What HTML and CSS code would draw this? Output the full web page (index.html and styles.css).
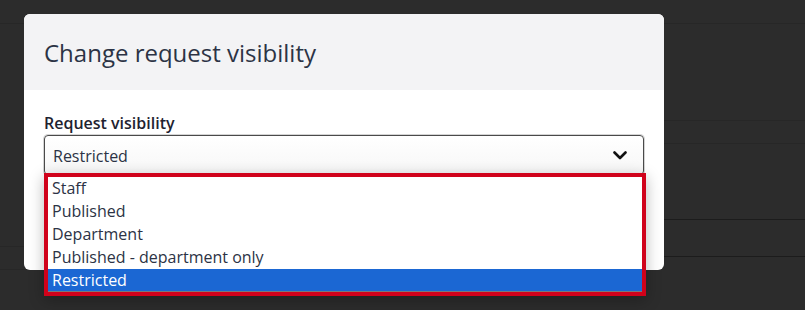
FILE: index.html
```html
<!DOCTYPE html>
<html lang="en">
<head>
<meta charset="utf-8">
<title>Change request visibility</title>
<link rel="stylesheet" href="styles.css">
</head>
<body>
<div class="backdrop">
  <div class="bg-side">
    <div class="bg-row side-top"></div>
    <div class="bg-row side-mid"></div>
    <div class="bg-row side-low"></div>
    <div class="bg-row side-rest"></div>
  </div>
  <div class="bg-main">
    <div class="bg-row main-top"></div>
    <div class="bg-row main-a"></div>
    <div class="bg-row main-b"></div>
    <div class="bg-row main-c dark"></div>
    <div class="bg-row main-d dark"></div>
    <div class="bg-row main-rest"></div>
  </div>
</div>

<div class="modal" role="dialog" aria-labelledby="modal-title">
  <div class="modal-header">
    <h2 class="modal-title" id="modal-title">Change request visibility</h2>
  </div>
  <div class="modal-body">
    <label class="field-label">Request visibility</label>
    <div class="select-wrap">
      <div class="select">
        <span class="select-value">Restricted</span>
        <svg class="chevron" width="14" height="9" viewBox="0 0 14 9" aria-hidden="true">
          <path d="M1.5 1.5 L7 7 L12.5 1.5" fill="none" stroke="#111" stroke-width="2.6" stroke-linecap="round" stroke-linejoin="round"/>
        </svg>
      </div>
      <ul class="listbox" role="listbox">
        <li class="option">Staff</li>
        <li class="option">Published</li>
        <li class="option">Department</li>
        <li class="option">Published - department only</li>
        <li class="option selected">Restricted</li>
      </ul>
    </div>
  </div>
</div>
</body>
</html>
```

FILE: styles.css
```css
* { box-sizing: border-box; }

html, body {
  margin: 0;
  padding: 0;
  width: 805px;
  height: 310px;
  overflow: hidden;
  background: #2c2c2c;
  font-family: "Open Sans", "Noto Sans", sans-serif;
}

.backdrop {
  display: flex;
  width: 805px;
  height: 310px;
}

.bg-side {
  width: 105px;
  display: flex;
  flex-direction: column;
}

.bg-main {
  flex: 1;
  display: flex;
  flex-direction: column;
}

.bg-row {
  border-bottom: 1px solid #272727;
}
.bg-row.dark { border-bottom-color: #1c1c1c; }

.side-top { height: 24px; }
.side-mid { height: 223px; }
.side-low { height: 23px; }
.side-rest { flex: 1; border-bottom: none; }

.main-top { height: 24px; }
.main-a { height: 97px; }
.main-b { height: 23px; }
.main-c { height: 76px; }
.main-d { height: 37px; }
.main-rest { flex: 1; border-bottom: none; }

.modal {
  position: absolute;
  left: 24px;
  top: 14px;
  width: 640px;
  height: 256px;
  background: #ffffff;
  border-radius: 6px;
  display: flex;
  flex-direction: column;
}

.modal-header {
  height: 76px;
  background: #f3f3f5;
  border-radius: 6px 6px 0 0;
  display: flex;
  align-items: center;
  padding: 0 20px;
}

.modal-title {
  margin: 0;
  font-size: 24px;
  font-weight: 400;
  color: #2c3345;
}

.modal-body {
  padding: 20px 20px 0;
  display: flex;
  flex-direction: column;
}

.field-label {
  font-size: 16px;
  font-weight: 600;
  color: #1e2230;
  line-height: 20px;
  margin-top: 3px;
  margin-bottom: 2px;
}

.select-wrap {
  position: relative;
}

.select {
  height: 40px;
  border: 1px solid #4a4a4a;
  border-radius: 4px;
  box-shadow: 0 0 0 1px #d4d4d4;
  display: flex;
  align-items: center;
  justify-content: space-between;
  padding: 1px 16px 0 8px;
  background: linear-gradient(#ffffff, #f7f7f7);
}

.select-value {
  font-size: 16px;
  color: #2c3345;
}

.chevron { display: block; }

.listbox {
  position: absolute;
  left: 0;
  top: 38px;
  width: 602px;
  margin: 0;
  padding: 0;
  list-style: none;
  background: #ffffff;
  border: 4px solid #d0021b;
  box-shadow: 0 4px 14px rgba(0, 0, 0, 0.28);
}

.option {
  height: 23px;
  line-height: 23px;
  padding-left: 4px;
  font-size: 16px;
  color: #2c3345;
}

.option.selected {
  height: 23px;
  line-height: 22px;
  background: #1b67d3;
  color: #ffffff;
  border-bottom: 1px solid #7a7a7a;
}
```
